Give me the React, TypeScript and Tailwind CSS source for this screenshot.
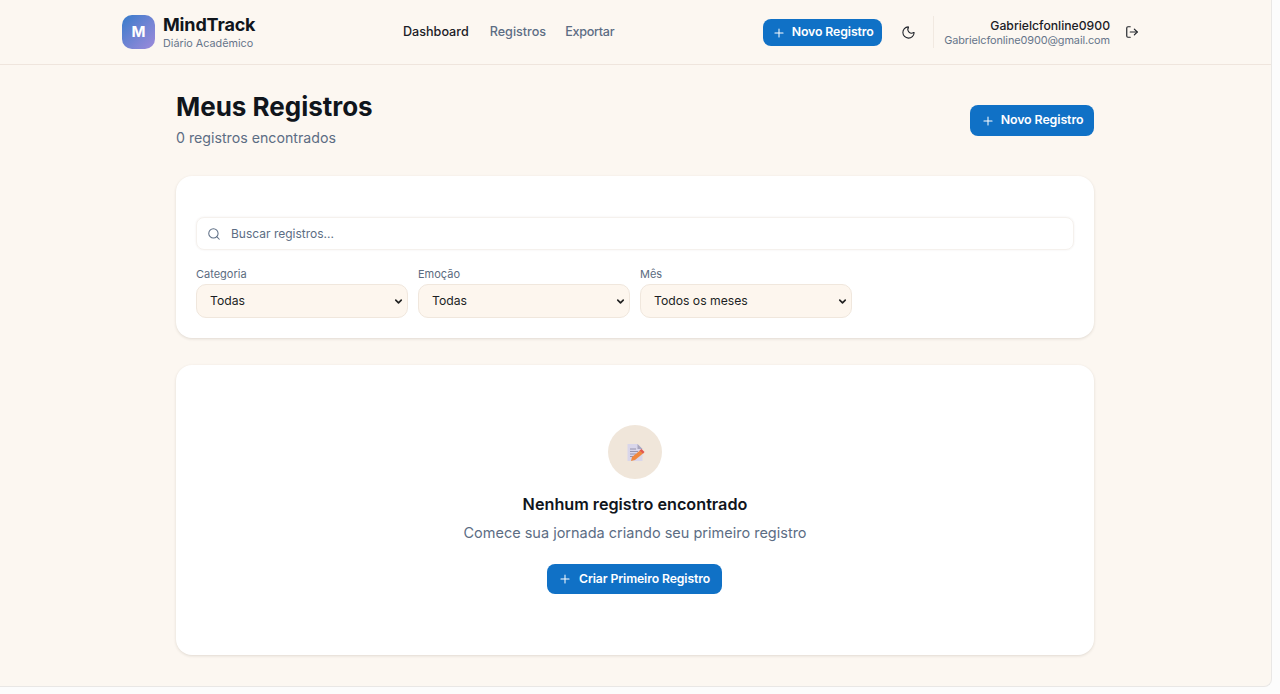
import { Plus, Moon, LogOut, Search, ChevronDown } from "lucide-react";

function PrimaryButton({ label, className, icon = 14, gap = "gap-2" }: { label: string; className: string; icon?: number; gap?: string }) {
  return (
    <button className={`flex items-center justify-center ${gap} bg-[#1071c6] text-white font-semibold tracking-[-0.1px] ${className}`}>
      <Plus size={icon} strokeWidth={1.75} />
      <span>{label}</span>
    </button>
  );
}

function FilterSelect({ label, value }: { label: string; value: string }) {
  return (
    <div className="w-[212px]">
      <div className="text-[11px] leading-[14px] text-[#5b6b80] mb-[3px]">{label}</div>
      <div className="h-[34px] rounded-[10px] bg-[#fdf6ee] border border-[#f0e7dd] flex items-center justify-between pl-[13px] pr-[3px] text-[12.2px] text-[#1c1f24]">
        <span>{value}</span>
        <ChevronDown size={11} strokeWidth={3.5} className="text-[#222]" />
      </div>
    </div>
  );
}

function NoteIcon() {
  return (
    <svg width="19" height="19" viewBox="0 0 19 19">
      <path d="M1.5 1h10l5 5v12h-15z" fill="#d9d6ea" />
      <path d="M11.5 1l5 5h-5z" fill="#a8a5bd" />
      <path d="M4 6h6M4 8.5h8M4 11h6M4 13.5h3" stroke="#8e8ca6" strokeWidth="0.9" />
      <path d="M5 18l1-4 8-6.5 3 3-8 6.5z" fill="#f0883e" />
      <path d="M13.5 7.5l2-1.5 3 3-1.5 1.7z" fill="#e2574c" />
    </svg>
  );
}

export default function App() {
  return (
    <div className="h-[694px] w-[1280px] bg-[#fcfcfc] overflow-hidden font-['Inter','Liberation_Sans',sans-serif]">
      <div className="w-[1272px] h-[687px] bg-[#fcf7f1] border-r border-b border-[#e9e7e5] rounded-br-lg overflow-hidden">
        <header className="h-[65px] border-b border-[#efe5dd] pl-[122px] pr-[132px] flex items-center justify-between">
          <div className="flex items-center gap-[8px] w-[281px]">
            <div className="w-[33px] h-[34px] rounded-[10px] bg-gradient-to-br from-[#2f7bcb] to-[#9d8adb] flex items-center justify-center text-white font-bold text-[15px]">M</div>
            <div>
              <div className="text-[18px] leading-[21px] font-bold text-[#10151c] tracking-[-0.15px]">MindTrack</div>
              <div className="text-[10.8px] leading-[14px] pt-[2px] text-[#66758a]">Diário Acadêmico</div>
            </div>
          </div>
          <nav className="flex items-center text-[12.6px] font-medium text-[#5c6d84] pt-px">
            <span className="text-[#1b2026]">Dashboard</span>
            <span className="ml-[21px]">Registros</span>
            <span className="ml-[19px] tracking-[-0.3px]">Exportar</span>
          </nav>
          <div className="flex items-center ml-auto">
            <PrimaryButton label="Novo Registro" className="w-[119px] h-[27px] rounded-lg text-[12.3px] pt-px" gap="gap-[6px]" />
            <Moon size={15} strokeWidth={1.75} className="ml-[19px] text-[#20242a]" />
            <div className="w-px h-[32px] bg-[#f1e9e1] ml-[17px] mr-[10px]" />
            <div className="text-right pt-px">
              <div className="text-[12.2px] leading-[15px] font-medium text-[#1b2026]">Gabrielcfonline0900</div>
              <div className="text-[10.9px] leading-[15px] text-[#66758a] tracking-[-0.1px]">Gabrielcfonline0900@gmail.com</div>
            </div>
            <LogOut size={14} strokeWidth={2} className="ml-[15px] text-[#20242a]" />
          </div>
        </header>

        <main className="w-[918px] ml-[176px]">
          <div className="flex items-start justify-between pt-[25px]">
            <div>
              <h1 className="text-[26px] leading-[34px] font-bold text-[#10151c] tracking-[-0.02px]">Meus Registros</h1>
              <p className="text-[14.2px] leading-[22px] mt-[3px] text-[#5c6d84]">0 registros encontrados</p>
            </div>
            <PrimaryButton label="Novo Registro" className="w-[124px] h-[31px] rounded-lg mt-[15px] text-[12.4px]" gap="gap-[6px]" />
          </div>

          <section className="mt-[27px] h-[162px] bg-white rounded-2xl shadow-[0_1px_3px_rgba(60,40,20,0.14)] px-[20px] pt-[41px]">
            <div className="w-[878px] h-[33px] rounded-lg border border-[#f5f1ed] shadow-[0_0_2px_rgba(60,40,20,0.08)] flex items-center pl-[10px] gap-[10px] text-[12px] text-[#5c6d84]">
              <Search size={14} strokeWidth={1.75} />
              <span className="pt-px">Buscar registros...</span>
            </div>
            <div className="flex gap-[10px] mt-[17px]">
              <FilterSelect label="Categoria" value="Todas" />
              <FilterSelect label="Emoção" value="Todas" />
              <FilterSelect label="Mês" value="Todos os meses" />
            </div>
          </section>

          <section className="mt-[27px] h-[290px] bg-white rounded-2xl shadow-[0_1px_3px_rgba(60,40,20,0.14)] flex flex-col items-center pt-[60px]">
            <div className="w-[54px] h-[54px] rounded-full bg-[#f0e6da] flex items-center justify-center">
              <NoteIcon />
            </div>
            <h2 className="mt-[14px] text-[16.2px] leading-[22px] font-semibold text-[#10151c]">Nenhum registro encontrado</h2>
            <p className="mt-[7px] text-[14.5px] leading-[22px] text-[#5c6d84]">Comece sua jornada criando seu primeiro registro</p>
            <PrimaryButton label="Criar Primeiro Registro" className="mt-[20px] mr-[2px] w-[175px] h-[30px] rounded-lg text-[12.2px]" gap="gap-[7px]" />
          </section>
        </main>
      </div>
    </div>
  );
}
